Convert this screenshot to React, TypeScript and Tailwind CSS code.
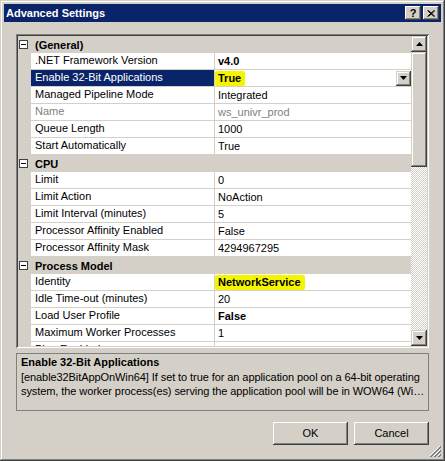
import React from "react";

type Row = {
  cat?: string;
  name?: string;
  value?: string;
  bold?: boolean;
  dim?: boolean;
  selected?: boolean;
  mark?: boolean;
};

const rows: Row[] = [
  { cat: "(General)" },
  { name: ".NET Framework Version", value: "v4.0", bold: true },
  { name: "Enable 32-Bit Applications", value: "True", bold: true, selected: true, mark: true },
  { name: "Managed Pipeline Mode", value: "Integrated" },
  { name: "Name", value: "ws_univr_prod", dim: true },
  { name: "Queue Length", value: "1000" },
  { name: "Start Automatically", value: "True" },
  { cat: "CPU" },
  { name: "Limit", value: "0" },
  { name: "Limit Action", value: "NoAction" },
  { name: "Limit Interval (minutes)", value: "5" },
  { name: "Processor Affinity Enabled", value: "False" },
  { name: "Processor Affinity Mask", value: "4294967295" },
  { cat: "Process Model" },
  { name: "Identity", value: "NetworkService", bold: true, mark: true },
  { name: "Idle Time-out (minutes)", value: "20" },
  { name: "Load User Profile", value: "False", bold: true },
  { name: "Maximum Worker Processes", value: "1" },
  { name: "Ping Enabled", value: "True" },
];

// classic raised 3d edge
const raised =
  "bg-[#d4d0c8] shadow-[inset_-1px_-1px_#404040,inset_1px_1px_#d4d0c8,inset_-2px_-2px_#808080,inset_2px_2px_#ffffff]";
const pushBtn =
  "bg-[#d4d0c8] shadow-[inset_-1px_-1px_#404040,inset_1px_1px_#ffffff,inset_-2px_-2px_#808080,inset_2px_2px_#d4d0c8]";

const Arrow = ({ up }: { up?: boolean }) => (
  <svg width="7" height="4" viewBox="0 0 7 4">
    {up ? <path d="M3.5 0 L7 4 L0 4 Z" fill="#000" /> : <path d="M0 0 L7 0 L3.5 4 Z" fill="#000" />}
  </svg>
);

const MinusBox = () => (
  <svg width="9" height="9" viewBox="0 0 9 9">
    <rect x="0.5" y="0.5" width="8" height="8" fill="#fff" stroke="#404040" />
    <path d="M2 4.5 H7" stroke="#000" />
  </svg>
);

function GridRow({ r }: { r: Row }) {
  if (r.cat) {
    return (
      <div className="h-[17px] flex items-center bg-[#d4d0c8] shrink-0">
        <div className="w-[13px] flex justify-center pl-[1px] pr-[3px]">
          <MinusBox />
        </div>
        <span className="pl-[4px] font-bold leading-[16px]">{r.cat}</span>
      </div>
    );
  }
  return (
    <div className="h-[17px] flex items-start bg-[#d4d0c8] shrink-0">
      <div className="w-[13px] h-[16px]" />
      <div
        className={`w-[183px] h-[16px] pl-[4px] leading-[15px] whitespace-nowrap overflow-hidden ${
          r.selected ? "bg-[#0a246a] text-white" : r.dim ? "bg-white text-[#808080]" : "bg-white text-black"
        }`}
      >
        {r.name}
      </div>
      <div className="w-[1px]" />
      <div className="flex-1 h-[16px] bg-white flex items-center">
        <span
          className={`leading-[15px] whitespace-nowrap ${r.mark ? "bg-[#f5f500] pl-[3px] pr-[4px] rounded-[2px]" : "pl-[3px]"} ${
            r.bold ? "font-bold" : ""
          } ${r.dim ? "text-[#808080]" : "text-black"}`}
        >
          {r.value}
        </span>
        {r.selected && (
          <div className={`ml-auto w-[15px] h-[15px] flex items-center justify-center ${raised}`}>
            <Arrow />
          </div>
        )}
      </div>
    </div>
  );
}

export default function App() {
  return (
    <div
      className="w-[445px] h-[461px] p-[4px] bg-[#d4d0c8] flex flex-col text-[11px] text-black shadow-[inset_-1px_-1px_#404040,inset_1px_1px_#d4d0c8,inset_-2px_-2px_#808080,inset_2px_2px_#ffffff]"
      style={{ fontFamily: '"Liberation Sans", Arial, sans-serif' }}
    >
      {/* title bar */}
      <div className="h-[18px] bg-[#0a246a] flex items-center pl-[2px] pr-[2px] shrink-0">
        <span className="text-white font-bold text-[11px] leading-[18px]">Advanced Settings</span>
        <div className="ml-auto flex gap-[2px]">
          <div className={`w-[16px] h-[14px] flex items-center justify-center font-bold text-[11px] leading-[14px] ${pushBtn}`}>
            ?
          </div>
          <div className={`w-[16px] h-[14px] flex items-center justify-center ${pushBtn}`}>
            <svg width="8" height="7" viewBox="0 0 8 7">
              <path d="M0.5 0.5 L7 6.5 M1.5 0.5 L8 6.5 M7 0.5 L0.5 6.5 M8 0.5 L1.5 6.5" stroke="#000" strokeWidth="1" />
            </svg>
          </div>
        </div>
      </div>

      {/* body */}
      <div className="flex-1 flex flex-col px-[12px] pt-[12px]">
        {/* property grid */}
        <div className="h-[314px] p-[2px] flex shadow-[inset_1px_1px_#808080,inset_-1px_-1px_#ffffff,inset_2px_2px_#404040,inset_-2px_-2px_#d4d0c8]">
          <div className="w-[393px] h-[310px] overflow-hidden flex flex-col">
            {rows.map((r, i) => (
              <GridRow key={i} r={r} />
            ))}
          </div>
          <div className="w-[16px] h-[310px] flex flex-col">
            <div className={`h-[16px] flex items-center justify-center ${raised}`}>
              <Arrow up />
            </div>
            <div className={`h-[115px] ${raised}`} />
            <div className="flex-1 bg-[image:repeating-conic-gradient(#d4d0c8_0_25%,#ffffff_0_50%)] bg-[length:2px_2px]" />
            <div className={`h-[16px] flex items-center justify-center ${raised}`}>
              <Arrow />
            </div>
          </div>
        </div>

        {/* description */}
        <div className="mt-[5px] h-[58px] border border-[#808080] pl-[4px] pt-[1px]">
          <div className="font-bold leading-[15px]">Enable 32-Bit Applications</div>
          <div className="leading-[14px] whitespace-nowrap tracking-[-0.08px]">
            [enable32BitAppOnWin64] If set to true for an application pool on a 64-bit operating
          </div>
          <div className="leading-[14px] whitespace-nowrap tracking-[-0.08px]">
            system, the worker process(es) serving the application pool will be in WOW64 (Wi…
          </div>
        </div>

        {/* buttons */}
        <div className="mt-[11px] flex justify-end gap-[6px]">
          <div className={`w-[75px] h-[23px] flex items-center justify-center ${pushBtn}`}>OK</div>
          <div className={`w-[75px] h-[23px] flex items-center justify-center ${pushBtn}`}>Cancel</div>
        </div>

        <div className="flex-1 flex justify-end items-end -mr-[12px]">
          <svg width="12" height="12" viewBox="0 0 12 12">
            <path d="M11 1 L1 11 M11 5 L5 11 M11 9 L9 11" stroke="#ffffff" />
            <path d="M12 1 L1 12 M12 2 L2 12 M12 5 L5 12 M12 6 L6 12 M12 9 L9 12 M12 10 L10 12" stroke="#808080" />
          </svg>
        </div>
      </div>
    </div>
  );
}
